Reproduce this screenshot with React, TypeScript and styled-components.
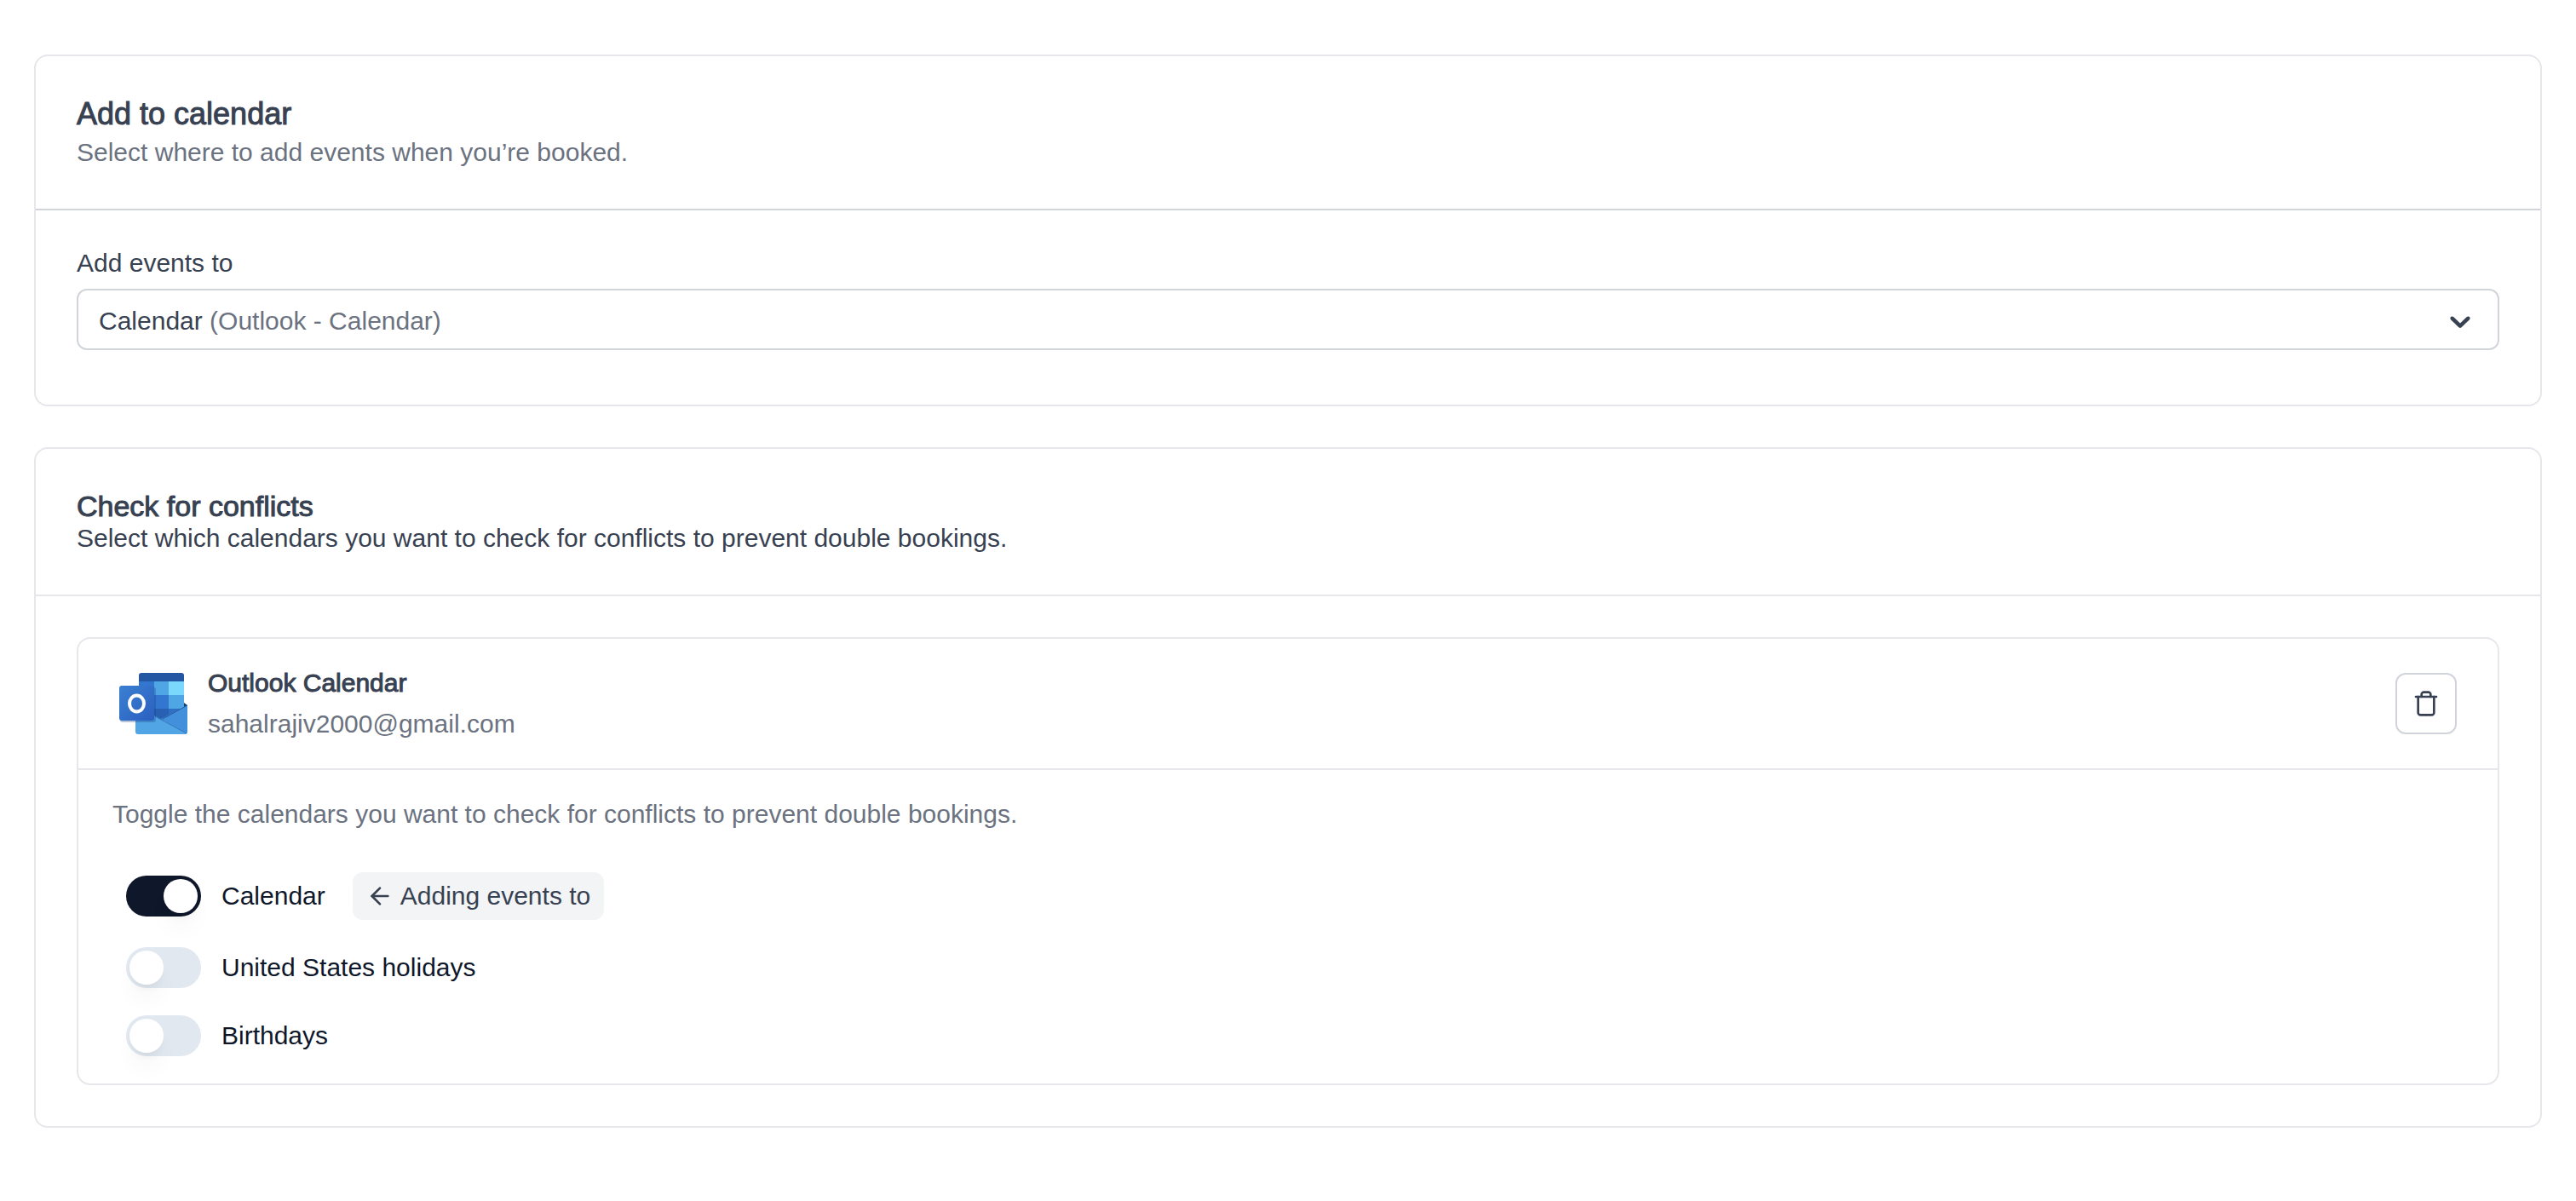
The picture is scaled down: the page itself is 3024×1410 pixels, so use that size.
import React, { useState } from "react";
import styled, { createGlobalStyle } from "styled-components";

const GlobalStyle = createGlobalStyle`
  *, *::before, *::after { box-sizing: border-box; }
  body {
    margin: 0;
    background: #fff;
    color: #374151;
    font-family: "Liberation Sans", Arial, sans-serif;
    font-size: 30px;
    line-height: 36px;
  }
  h2, h3, p, ul { margin: 0; padding: 0; }
`;

const Page = styled.main`
  display: flex;
  flex-direction: column;
  gap: 48px;
  padding: 64px 40px;
`;

const Card = styled.section`
  border: 2px solid #e5e7eb;
  border-radius: 16px;
`;

const CardHeader = styled.header<{ $strong?: boolean; $gap?: number }>`
  display: flex;
  flex-direction: column;
  gap: ${(p) => p.$gap ?? 0}px;
  padding: 48px;
  border-bottom: 2px solid ${(p) => (p.$strong ? "#d1d5db" : "#e5e7eb")};
`;

const CardTitle = styled.h2<{ $size: number }>`
  font-size: ${(p) => p.$size}px;
  line-height: 39px;
  font-weight: 400;
  -webkit-text-stroke: 1px currentColor;
`;

const Muted = styled.p`
  color: #6b7280;
`;

const FormBody = styled.div`
  display: flex;
  flex-direction: column;
  gap: 12px;
  padding: 44px 48px 64px;
`;

const SelectBox = styled.div`
  display: grid;
  grid-template-columns: 1fr;
  height: 72px;
  border: 2px solid #d1d5db;
  border-radius: 12px;
`;

const NativeSelect = styled.select`
  grid-area: 1 / 1;
  appearance: none;
  width: 100%;
  border: 0;
  border-radius: 10px;
  padding: 4px 24px 0;
  background: transparent;
  color: transparent;
  font: inherit;
  cursor: pointer;
  option { color: #374151; }
`;

const SelectValue = styled.div`
  grid-area: 1 / 1;
  display: flex;
  align-items: center;
  justify-content: space-between;
  padding: 4px 24px 0;
  pointer-events: none;
`;

const Note = styled.span`
  color: #6b7280;
`;

const Body = styled.div`
  padding: 48px;
`;

const Account = styled.article`
  border: 2px solid #e5e7eb;
  border-radius: 16px;
`;

const AccountHeader = styled.header`
  display: flex;
  align-items: center;
  gap: 24px;
  padding: 28px 48px;
  border-bottom: 2px solid #e5e7eb;
`;

const AccountText = styled.div`
  flex: 1;
  line-height: 48px;
`;

const AccountName = styled.h3`
  font-size: 30px;
  font-weight: 400;
  -webkit-text-stroke: 1px currentColor;
`;

const IconButton = styled.button`
  display: grid;
  place-items: center;
  width: 72px;
  height: 72px;
  padding: 0;
  border: 2px solid #d1d5db;
  border-radius: 12px;
  background: #fff;
  color: #374151;
  cursor: pointer;
`;

const AccountBody = styled.div`
  display: flex;
  flex-direction: column;
  gap: 48px;
  padding: 32px 40px;
`;

const Hint = styled(Muted)`
  line-height: 40px;
`;

const CalendarList = styled.ul`
  display: flex;
  flex-direction: column;
  gap: 32px;
  padding: 0 16px;
  list-style: none;
`;

const CalendarRow = styled.li`
  display: flex;
  align-items: center;
  gap: 32px;
`;

const ToggleLabel = styled.label`
  display: flex;
  align-items: center;
  gap: 24px;
  color: #0f172a;
  cursor: pointer;
`;

const Switch = styled.input`
  appearance: none;
  display: flex;
  justify-content: flex-start;
  width: 88px;
  height: 48px;
  margin: 0;
  padding: 4px;
  border-radius: 24px;
  background: #e2e8f0;
  cursor: pointer;

  &::before {
    content: "";
    width: 40px;
    height: 40px;
    border-radius: 50%;
    background: #fff;
    box-shadow: 0 20px 30px -6px rgba(0, 0, 0, 0.06), 0 8px 12px -4px rgba(0, 0, 0, 0.05);
  }

  &:checked {
    justify-content: flex-end;
    background: #0f172a;
  }
`;

const Badge = styled.span`
  display: flex;
  align-items: center;
  gap: 8px;
  height: 56px;
  padding: 0 16px;
  border-radius: 12px;
  background: #f3f4f6;
`;

function ChevronIcon() {
  return (
    <svg width="40" height="40" viewBox="0 0 20 20" fill="currentColor" aria-hidden="true">
      <path d="M4.516 7.548c0.436-0.446 1.043-0.481 1.576 0l3.908 3.747 3.908-3.747c0.533-0.481 1.141-0.446 1.574 0 0.436 0.445 0.408 1.197 0 1.615-0.406 0.418-4.695 4.502-4.695 4.502-0.217 0.223-0.502 0.335-0.787 0.335s-0.57-0.112-0.789-0.335c0 0-4.287-4.084-4.695-4.502s-0.436-1.17 0-1.615z" />
    </svg>
  );
}

function TrashIcon() {
  return (
    <svg width="32" height="32" viewBox="0 0 24 24" fill="none" stroke="currentColor" strokeWidth="2" strokeLinecap="round" strokeLinejoin="round" aria-hidden="true">
      <path d="M3 6h18" />
      <path d="M19 6v14c0 1-1 2-2 2H7c-1 0-2-1-2-2V6" />
      <path d="M8 6V4c0-1 1-2 2-2h4c1 0 2 1 2 2v2" />
    </svg>
  );
}

function ArrowLeftIcon() {
  return (
    <svg width="32" height="32" viewBox="0 0 24 24" fill="none" stroke="currentColor" strokeWidth="2" strokeLinecap="round" strokeLinejoin="round" aria-hidden="true">
      <path d="m12 19-7-7 7-7" />
      <path d="M19 12H5" />
    </svg>
  );
}

function OutlookLogo() {
  return (
    <svg width="80" height="72" viewBox="0 0 80 72" aria-hidden="true">
      <defs>
        <linearGradient id="tile" x1="0" y1="0" x2="1" y2="1">
          <stop offset="0" stopColor="#3a80d2" />
          <stop offset="1" stopColor="#2b5fc0" />
        </linearGradient>
      </defs>
      <path d="M76 35l4 3-4 5z" fill="#123b6d" />
      <path d="M23 10V3a3 3 0 0 1 3-3h47a3 3 0 0 1 3 3v7z" fill="#2457a3" />
      <path d="M23 10h18v16H23z" fill="#3276d0" />
      <path d="M41 10h17v16H41z" fill="#50a5e4" />
      <path d="M58 10h18v16H58z" fill="#7bd8fc" />
      <path d="M23 26h18v16H23z" fill="#2c64bd" />
      <path d="M41 26h17v16H41z" fill="#3276d0" />
      <path d="M58 26h18v16H58z" fill="#50a5e4" />
      <path d="M23 42h35v14H23z" fill="#2860b2" />
      <path d="M58 42h18v14H58z" fill="#3070c4" />
      <path d="M80 38v31a3 3 0 0 1-3 3L49 54z" fill="#4290dc" />
      <path d="M19 38l60 33a3 3 0 0 1-2 1H22a3 3 0 0 1-3-3z" fill="#52a5e5" />
      <path d="M42 51l37 20" stroke="#3479bd" strokeWidth="1" />
      <path d="M51 54l29-16" stroke="#285c9c" strokeWidth="1" />
      <rect x="1" y="17" width="42" height="41" rx="3" fill="#153f7c" opacity=".3" />
      <rect y="15" width="41" height="41" rx="3" fill="url(#tile)" />
      <ellipse cx="20.500" cy="36" rx="8.500" ry="9.500" fill="none" stroke="#fff" strokeWidth="4" />
    </svg>
  );
}

const calendars = [
  { id: "calendar", name: "Calendar", destination: true },
  { id: "holidays", name: "United States holidays", destination: false },
  { id: "birthdays", name: "Birthdays", destination: false },
];

export default function App() {
  const [enabled, setEnabled] = useState<Record<string, boolean>>({ calendar: true });
  const toggle = (id: string) => setEnabled((current) => ({ ...current, [id]: !current[id] }));

  return (
    <>
      <GlobalStyle />
      <Page>
        <Card>
          <CardHeader $strong $gap={8}>
            <CardTitle $size={36}>Add to calendar</CardTitle>
            <Muted>Select where to add events when you’re booked.</Muted>
          </CardHeader>
          <FormBody>
            <label htmlFor="destination">Add events to</label>
            <SelectBox>
              <NativeSelect id="destination">
                <option>Calendar (Outlook - Calendar)</option>
              </NativeSelect>
              <SelectValue aria-hidden="true">
                <span>
                  Calendar <Note>(Outlook - Calendar)</Note>
                </span>
                <ChevronIcon />
              </SelectValue>
            </SelectBox>
          </FormBody>
        </Card>

        <Card>
          <CardHeader>
            <CardTitle $size={34}>Check for conflicts</CardTitle>
            <p>Select which calendars you want to check for conflicts to prevent double bookings.</p>
          </CardHeader>
          <Body>
            <Account>
              <AccountHeader>
                <OutlookLogo />
                <AccountText>
                  <AccountName>Outlook Calendar</AccountName>
                  <Muted>sahalrajiv2000@gmail.com</Muted>
                </AccountText>
                <IconButton type="button" aria-label="Remove calendar">
                  <TrashIcon />
                </IconButton>
              </AccountHeader>
              <AccountBody>
                <Hint>Toggle the calendars you want to check for conflicts to prevent double bookings.</Hint>
                <CalendarList>
                  {calendars.map((calendar) => (
                    <CalendarRow key={calendar.id}>
                      <ToggleLabel>
                        <Switch
                          type="checkbox"
                          role="switch"
                          checked={!!enabled[calendar.id]}
                          onChange={() => toggle(calendar.id)}
                        />
                        {calendar.name}
                      </ToggleLabel>
                      {calendar.destination && (
                        <Badge>
                          <ArrowLeftIcon />
                          Adding events to
                        </Badge>
                      )}
                    </CalendarRow>
                  ))}
                </CalendarList>
              </AccountBody>
            </Account>
          </Body>
        </Card>
      </Page>
    </>
  );
}
